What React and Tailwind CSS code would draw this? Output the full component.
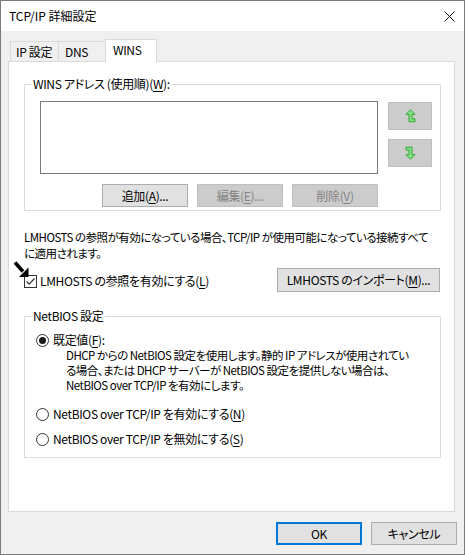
import clsx from 'clsx';

function Key({ children }) {
  return <span className="underline underline-offset-[2px]">{children}</span>;
}

function Btn({ children, disabled = false, primary = false, className }) {
  return (
    <div
      className={clsx(
        'flex h-[23px] items-center justify-center',
        primary ? 'border-2 border-[#0078d7] bg-[#e1e1e1]' : 'border',
        !primary && (disabled ? 'border-[#bfbfbf] bg-[#cccccc] text-[#838383]' : 'border-[#adadad] bg-[#e1e1e1]'),
        className
      )}
    >
      {children}
    </div>
  );
}

function GreenArrow({ down = false }) {
  return (
    <svg width="11" height="14" viewBox="0 0 11 14" className={down ? 'rotate-180' : ''}>
      <path
        d="M5.5 0.8 L10 5.3 L7 5.3 L7 9.8 L10 9.8 L10 12.8 L4 12.8 L4 5.3 L1 5.3 Z"
        fill="#84e184"
        stroke="#36a936"
        strokeWidth="1"
        strokeLinejoin="miter"
      />
    </svg>
  );
}

function Radio({ checked = false }) {
  return (
    <span className="flex h-[13px] w-[13px] shrink-0 items-center justify-center rounded-full border border-[#333333] bg-white">
      {checked && <span className="h-[7px] w-[7px] rounded-full bg-[#1a1a1a]" />}
    </span>
  );
}

export default function App() {
  return (
    <div className="relative flex h-[555px] w-[465px] flex-col overflow-hidden border border-[#7a7a7a] bg-[#f0f0f0] font-['Noto_Sans_CJK_JP',sans-serif] text-[12px] leading-[16px] tracking-[-0.35px] text-black [font-feature-settings:'palt']">
      {/* title bar */}
      <div className="flex h-[30px] shrink-0 items-center justify-between bg-white pl-[8px] pr-[9px]">
        <span className="tracking-normal">TCP/IP 詳細設定</span>
        <svg width="11" height="11" viewBox="0 0 11 11">
          <path d="M0.5 0.5 L10.5 10.5 M10.5 0.5 L0.5 10.5" stroke="#111" strokeWidth="1" />
        </svg>
      </div>

      <div className="flex flex-col pl-[7px] pt-[8px]">
        {/* tabs */}
        <div className="flex h-[22px] items-end pl-[2px]">
          <div className="flex h-[20px] w-[49px] items-center border border-b-0 border-[#d9d9d9] pl-[5px]">IP 設定</div>
          <div className="flex h-[20px] w-[46px] items-center border-t border-[#d9d9d9] pl-[6px]">DNS</div>
          <div className="relative z-10 -mb-px flex h-[23px] w-[52px] items-center border border-b-0 border-[#d9d9d9] bg-white pb-[3px] pl-[7px]">
            WINS
          </div>
        </div>

        {/* tab panel */}
        <div className="flex h-[451px] w-[447px] flex-col border border-[#d9d9d9] bg-white">
          <fieldset className="ml-[15px] mt-[14px] w-[417px] border border-[#dcdcdc] pb-[3px]">
            <legend className="ml-[6px] px-[2px]">
              WINS アドレス (使用順)(<Key>W</Key>):
            </legend>
            <div className="mt-[9px] flex pl-[15px]">
              <div className="h-[73px] w-[338px] border border-[#7a7a7a] bg-white" />
              <div className="ml-[10px] mt-[1px] flex flex-col gap-[9px]">
                <Btn disabled className="h-[28px] w-[44px]">
                  <GreenArrow />
                </Btn>
                <Btn disabled className="h-[28px] w-[44px]">
                  <GreenArrow down />
                </Btn>
              </div>
            </div>
            <div className="mt-[10px] flex gap-[9px] pl-[77px]">
              <Btn className="w-[86px]">
                追加(<Key>A</Key>)...
              </Btn>
              <Btn disabled className="w-[86px]">
                編集(<Key>E</Key>)...
              </Btn>
              <Btn disabled className="w-[86px]">
                削除(<Key>V</Key>)
              </Btn>
            </div>
          </fieldset>

          <p className="ml-[15px] mt-[18px] whitespace-nowrap text-[11.5px] tracking-[-0.5px]">
            LMHOSTS の参照が有効になっている場合、TCP/IP が使用可能になっている接続すべて
            <br />
            に適用されます。
          </p>

          <div className="ml-[15px] mt-[7px] flex w-[416px] items-start">
            <div className="mt-[5px] flex items-center">
              <span className="flex h-[13px] w-[13px] items-center justify-center border border-[#333333] bg-white">
                <svg width="11" height="11" viewBox="0 0 11 11">
                  <path d="M1.5 5.5 L4.2 8.2 L9.5 2.5" fill="none" stroke="#333" strokeWidth="1.2" />
                </svg>
              </span>
              <span className="ml-[3px]">
                LMHOSTS の参照を有効にする(<Key>L</Key>)
              </span>
            </div>
            <Btn className="ml-auto h-[24px] w-[163px]">
              LMHOSTS のインポート(<Key>M</Key>)...
            </Btn>
          </div>

          <fieldset className="ml-[15px] mt-[16px] w-[417px] border border-[#dcdcdc] pb-[10px]">
            <legend className="ml-[6px] px-[2px]">NetBIOS 設定</legend>
            <div className="mt-[8px] flex items-center pl-[11px]">
              <Radio checked />
              <span className="ml-[4px]">
                既定値(<Key>F</Key>):
              </span>
            </div>
            <p className="ml-[41px] whitespace-nowrap text-[11.5px] leading-[15px] tracking-[-0.5px]">
              DHCP からの NetBIOS 設定を使用します。静的 IP アドレスが使用されてい
              <br />
              る場合、または DHCP サーバーが NetBIOS 設定を提供しない場合は、
              <br />
              NetBIOS over TCP/IP を有効にします。
            </p>
            <div className="mt-[13px] flex items-center pl-[11px]">
              <Radio />
              <span className="ml-[4px]">
                NetBIOS over TCP/IP を有効にする(<Key>N</Key>)
              </span>
            </div>
            <div className="mt-[9px] flex items-center pl-[11px]">
              <Radio />
              <span className="ml-[4px]">
                NetBIOS over TCP/IP を無効にする(<Key>S</Key>)
              </span>
            </div>
          </fieldset>
        </div>

        {/* dialog buttons */}
        <div className="mt-[10px] flex justify-end gap-[9px] pr-[7px]">
          <Btn primary className="w-[86px]">
            OK
          </Btn>
          <Btn className="w-[86px]">キャンセル</Btn>
        </div>
      </div>

      {/* mouse pointer */}
      <svg className="absolute left-[12px] top-[260px]" width="16" height="17" viewBox="0 0 16 17">
        <path d="M2 1.5 L10 10.5" stroke="#000" strokeWidth="3.5" />
        <path d="M15.5 16 L15.5 6.5 L6 16 Z" fill="#000" />
      </svg>
    </div>
  );
}
